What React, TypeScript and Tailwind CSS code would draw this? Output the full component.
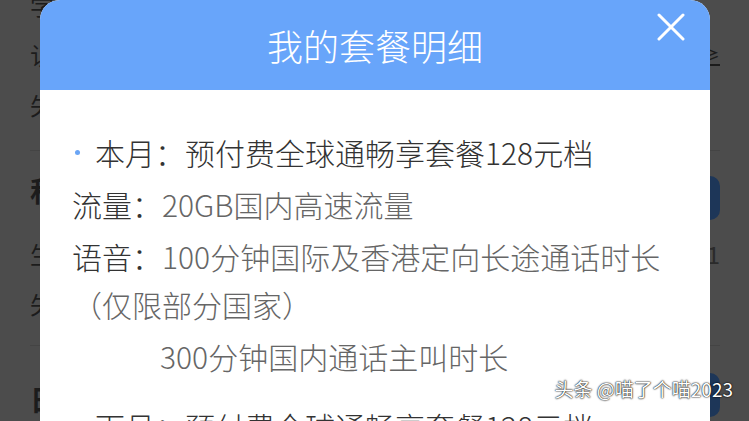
import React from 'react';

const font = { fontFamily: '"Noto Sans CJK SC", "Noto Sans", sans-serif' };

function Backdrop() {
    return (
        <div className="w-full h-full pl-[30px] pr-[29px] text-[#1c1c1c]">
            <div className="-mt-[20px] text-[24px] leading-[50px]">
                <div>学</div>
                <div className="flex justify-between items-center">
                    <span>认</span>
                    <span className="text-[20px] underline">≥</span>
                </div>
                <div>失</div>
            </div>
            <div className="mt-[20px] border-b border-[#444444]" />
            <div className="h-[78px] flex justify-between items-center">
                <span className="text-[28px] font-bold">私</span>
                <span className="mt-[16px] w-[54px] h-[44px] rounded-[10px] bg-[#1d3658]" />
            </div>
            <div className="text-[24px] leading-[50px]">
                <div className="flex justify-between items-center">
                    <span>生</span>
                    <span className="text-[#2a2a2a]">1</span>
                </div>
                <div>失</div>
            </div>
            <div className="mt-[16px] border-b border-[#444444]" />
            <div className="h-[98px] flex justify-between items-start">
                <span className="mt-[32px] text-[28px] font-bold">日</span>
                <span className="mt-[27px] w-[54px] h-[44px] rounded-[10px] bg-[#1d3658]" />
            </div>
        </div>
    );
}

function CloseIcon() {
    return (
        <svg width="28" height="28" viewBox="0 0 28 28" fill="none">
            <path d="M2 2L26 26M26 2L2 26" stroke="white" strokeWidth="3" strokeLinecap="round" />
        </svg>
    );
}

export default function App() {
    return (
        <div className="relative w-[749px] h-[421px] overflow-hidden bg-[#4c4c4c]" style={font}>
            <Backdrop />

            {/* Modal */}
            <div className="absolute left-[40px] top-0 w-[670px] h-[520px] bg-white rounded-t-[20px] overflow-hidden">
                <div className="relative h-[90px] bg-[#68a5fa] flex items-center justify-center">
                    <h2 className="text-[36px] font-light text-white leading-none">我的套餐明细</h2>
                    <button className="absolute right-[25px] top-[13px]">
                        <CloseIcon />
                    </button>
                </div>

                <div className="pt-[38px] pl-[32px] pr-[32px] text-[30px] font-light leading-[48px] text-[#666666]">
                    <div className="mb-[4px] flex items-center text-[#333333]">
                        <span className="ml-[3px] mr-[15px] w-[5px] h-[5px] rounded-full bg-[#6aa5f5]" />
                        <span>本月：预付费全球通畅享套餐128元档</span>
                    </div>
                    <p className="mb-[4px]">
                        <span className="text-[#333333]">流量：</span>20GB国内高速流量
                    </p>
                    <p className="mb-[4px]">
                        <span className="text-[#333333]">语音：</span>100分钟国际及香港定向长途通话时长（仅限部分国家）
                    </p>
                    <p className="mb-[22px] pl-[88px]">300分钟国内通话主叫时长</p>
                    <div className="mb-[4px] flex items-center text-[#333333]">
                        <span className="ml-[3px] mr-[15px] w-[5px] h-[5px] rounded-full bg-[#6aa5f5]" />
                        <span>下月：预付费全球通畅享套餐128元档</span>
                    </div>
                    <p className="mb-[4px]">
                        <span className="text-[#333333]">流量：</span>20GB国内高速流量
                    </p>
                </div>
            </div>

            {/* Watermark */}
            <div className="absolute right-[16px] top-[376px] text-[19px] leading-[26px] text-white [text-shadow:0_0_2px_#000,0_0_1px_#000]">
                头条 @喵了个喵2023
            </div>
        </div>
    );
}
